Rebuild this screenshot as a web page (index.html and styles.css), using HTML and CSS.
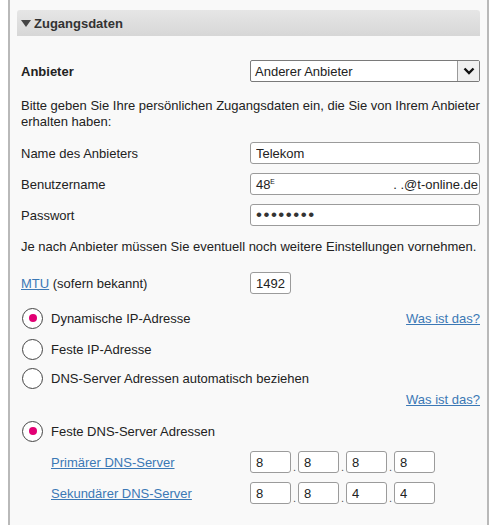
FILE: index.html
```html
<!DOCTYPE html>
<html lang="de">
<head>
    <meta charset="UTF-8">
    <meta name="viewport" content="width=device-width, initial-scale=1.0">
    <title>Zugangsdaten</title>
    <link rel="stylesheet" href="styles.css">
</head>
<body>
    <div class="panel">
        <div class="section-head">
            <span class="arrow"></span>Zugangsdaten
        </div>

        <div class="section-body">
            <div class="row row-provider">
                <label class="label bold">Anbieter</label>
                <div class="select">
                    <span>Anderer Anbieter</span>
                    <span class="select-btn">
                        <svg width="12" height="8" viewBox="0 0 12 8"><path d="M1.5 1.5 L6 6 L10.5 1.5" fill="none" stroke="#111" stroke-width="2.4"/></svg>
                    </span>
                </div>
            </div>

            <p class="intro">Bitte geben Sie Ihre persönlichen Zugangsdaten ein, die Sie von Ihrem Anbieter erhalten haben:</p>

            <div class="row">
                <label class="label">Name des Anbieters</label>
                <input class="field" type="text" value="Telekom">
            </div>
            <div class="row">
                <label class="label">Benutzername</label>
                <div class="field field-split">
                    <span>48<span class="cut">ᴱ</span></span>
                    <span>. .@t-online.de</span>
                </div>
            </div>
            <div class="row">
                <label class="label">Passwort</label>
                <input class="field pw" type="password" value="geheim12">
            </div>

            <p class="hint">Je nach Anbieter müssen Sie eventuell noch weitere Einstellungen vornehmen.</p>

            <div class="row row-mtu">
                <label class="label"><a href="#">MTU</a> (sofern bekannt)</label>
                <input class="field mtu" type="text" value="1492">
            </div>

            <div class="radio-row first">
                <span class="radio checked"></span>
                <span class="radio-label">Dynamische IP-Adresse</span>
                <a class="help" href="#">Was ist das?</a>
            </div>
            <div class="radio-row fixed-ip">
                <span class="radio"></span>
                <span class="radio-label">Feste IP-Adresse</span>
            </div>
            <div class="radio-row dns-auto">
                <span class="radio"></span>
                <span class="radio-label">DNS-Server Adressen automatisch beziehen</span>
            </div>
            <div class="help-row"><a class="help" href="#">Was ist das?</a></div>
            <div class="radio-row dns-fixed">
                <span class="radio checked"></span>
                <span class="radio-label">Feste DNS-Server Adressen</span>
            </div>

            <div class="row ip-row">
                <a class="label sub" href="#">Primärer DNS-Server</a>
                <div class="ip">
                    <input type="text" value="8"><span class="dot">.</span>
                    <input type="text" value="8"><span class="dot">.</span>
                    <input type="text" value="8"><span class="dot">.</span>
                    <input type="text" value="8">
                </div>
            </div>
            <div class="row ip-row">
                <a class="label sub" href="#">Sekundärer DNS-Server</a>
                <div class="ip">
                    <input type="text" value="8"><span class="dot">.</span>
                    <input type="text" value="8"><span class="dot">.</span>
                    <input type="text" value="4"><span class="dot">.</span>
                    <input type="text" value="4">
                </div>
            </div>
        </div>
    </div>
</body>
</html>
```

FILE: styles.css
```css
body {
    margin: 0;
    background: #fff;
    font-family: "Liberation Sans", Arial, sans-serif;
    font-size: 13px;
    color: #222;
}

.panel {
    margin-left: 8px;
    border-left: 2px solid #b9b9b9;
    border-right: 2px solid #b9b9b9;
    background: #f9f9f9;
    padding: 10px 7px 0;
    height: 515px;
}

.section-head {
    height: 26px;
    display: flex;
    align-items: center;
    padding-left: 4px;
    background: linear-gradient(#e6e6e6, #d7d7d7);
    border-radius: 3px 3px 0 0;
    font-weight: bold;
    color: #333;
}

.arrow {
    width: 0;
    height: 0;
    border-left: 5px solid transparent;
    border-right: 5px solid transparent;
    border-top: 7px solid #444;
    margin-right: 3px;
}

.section-body {
    padding: 24px 0 0 4px;
}

.row {
    display: flex;
    align-items: center;
    height: 22px;
    margin-bottom: 9px;
}

.label {
    width: 229px;
    flex-shrink: 0;
}

.bold {
    font-weight: bold;
}

a {
    color: #3b78b5;
    text-decoration: underline;
}

.select {
    flex: 1;
    height: 20px;
    display: flex;
    align-items: center;
    justify-content: space-between;
    border: 1px solid #7a7a7a;
    border-radius: 2px;
    background: #fff;
    padding-left: 4px;
}

.select-btn {
    width: 21px;
    height: 20px;
    display: flex;
    align-items: center;
    justify-content: center;
    border-left: 1px solid #9a9a9a;
    background: #f0f0f0;
}

.intro {
    margin: 16px 0 12px;
    line-height: 16px;
}

.field {
    flex: 1;
    width: 0;
    min-width: 0;
    box-sizing: border-box;
    height: 22px;
    border: 1px solid #9b9b9b;
    border-radius: 3px;
    background: #fff;
    font: inherit;
    color: #222;
    padding: 0 5px;
    margin: 0;
}

.field-split {
    display: flex;
    align-items: center;
    justify-content: space-between;
    padding-right: 1px;
}

.cut {
    font-size: 10px;
    vertical-align: 3px;
}

.pw {
    font-size: 17px;
    letter-spacing: 1.5px;
    line-height: 20px;
    color: #333;
}

.hint {
    margin: 13px 0 17px;
    line-height: 16px;
}

.mtu {
    flex: none;
    width: 41px;
}

.row-mtu {
    margin-bottom: 13px;
}

.radio-row {
    display: flex;
    align-items: center;
    height: 22px;
    margin-bottom: 9px;
}

.radio {
    box-sizing: border-box;
    width: 21px;
    height: 21px;
    border: 1.5px solid #444;
    border-radius: 50%;
    background: #fff;
    margin-left: 1px;
    margin-right: 8px;
    display: flex;
    align-items: center;
    justify-content: center;
}

.radio.checked::after {
    content: "";
    width: 8px;
    height: 8px;
    border-radius: 50%;
    background: #e20074;
}

.radio-label {
    flex: 1;
}

.help {
    white-space: nowrap;
}

.fixed-ip {
    margin-bottom: 7px;
}

.dns-auto {
    margin-bottom: 0;
}

.help-row {
    text-align: right;
    height: 16px;
    line-height: 16px;
    margin-top: 3px;
}

.dns-fixed {
    margin-top: 12px;
}

.sub {
    padding-left: 30px;
    width: 199px;
}

.ip {
    display: flex;
    align-items: flex-end;
}

.ip input {
    box-sizing: border-box;
    width: 41px;
    height: 22px;
    border: 1px solid #9b9b9b;
    border-radius: 3px;
    background: #fff;
    font: inherit;
    color: #222;
    padding: 0 5px;
    margin: 0;
}

.dot {
    width: 7px;
    text-align: center;
    font-size: 11px;
    line-height: 12px;
    color: #555;
}
```
